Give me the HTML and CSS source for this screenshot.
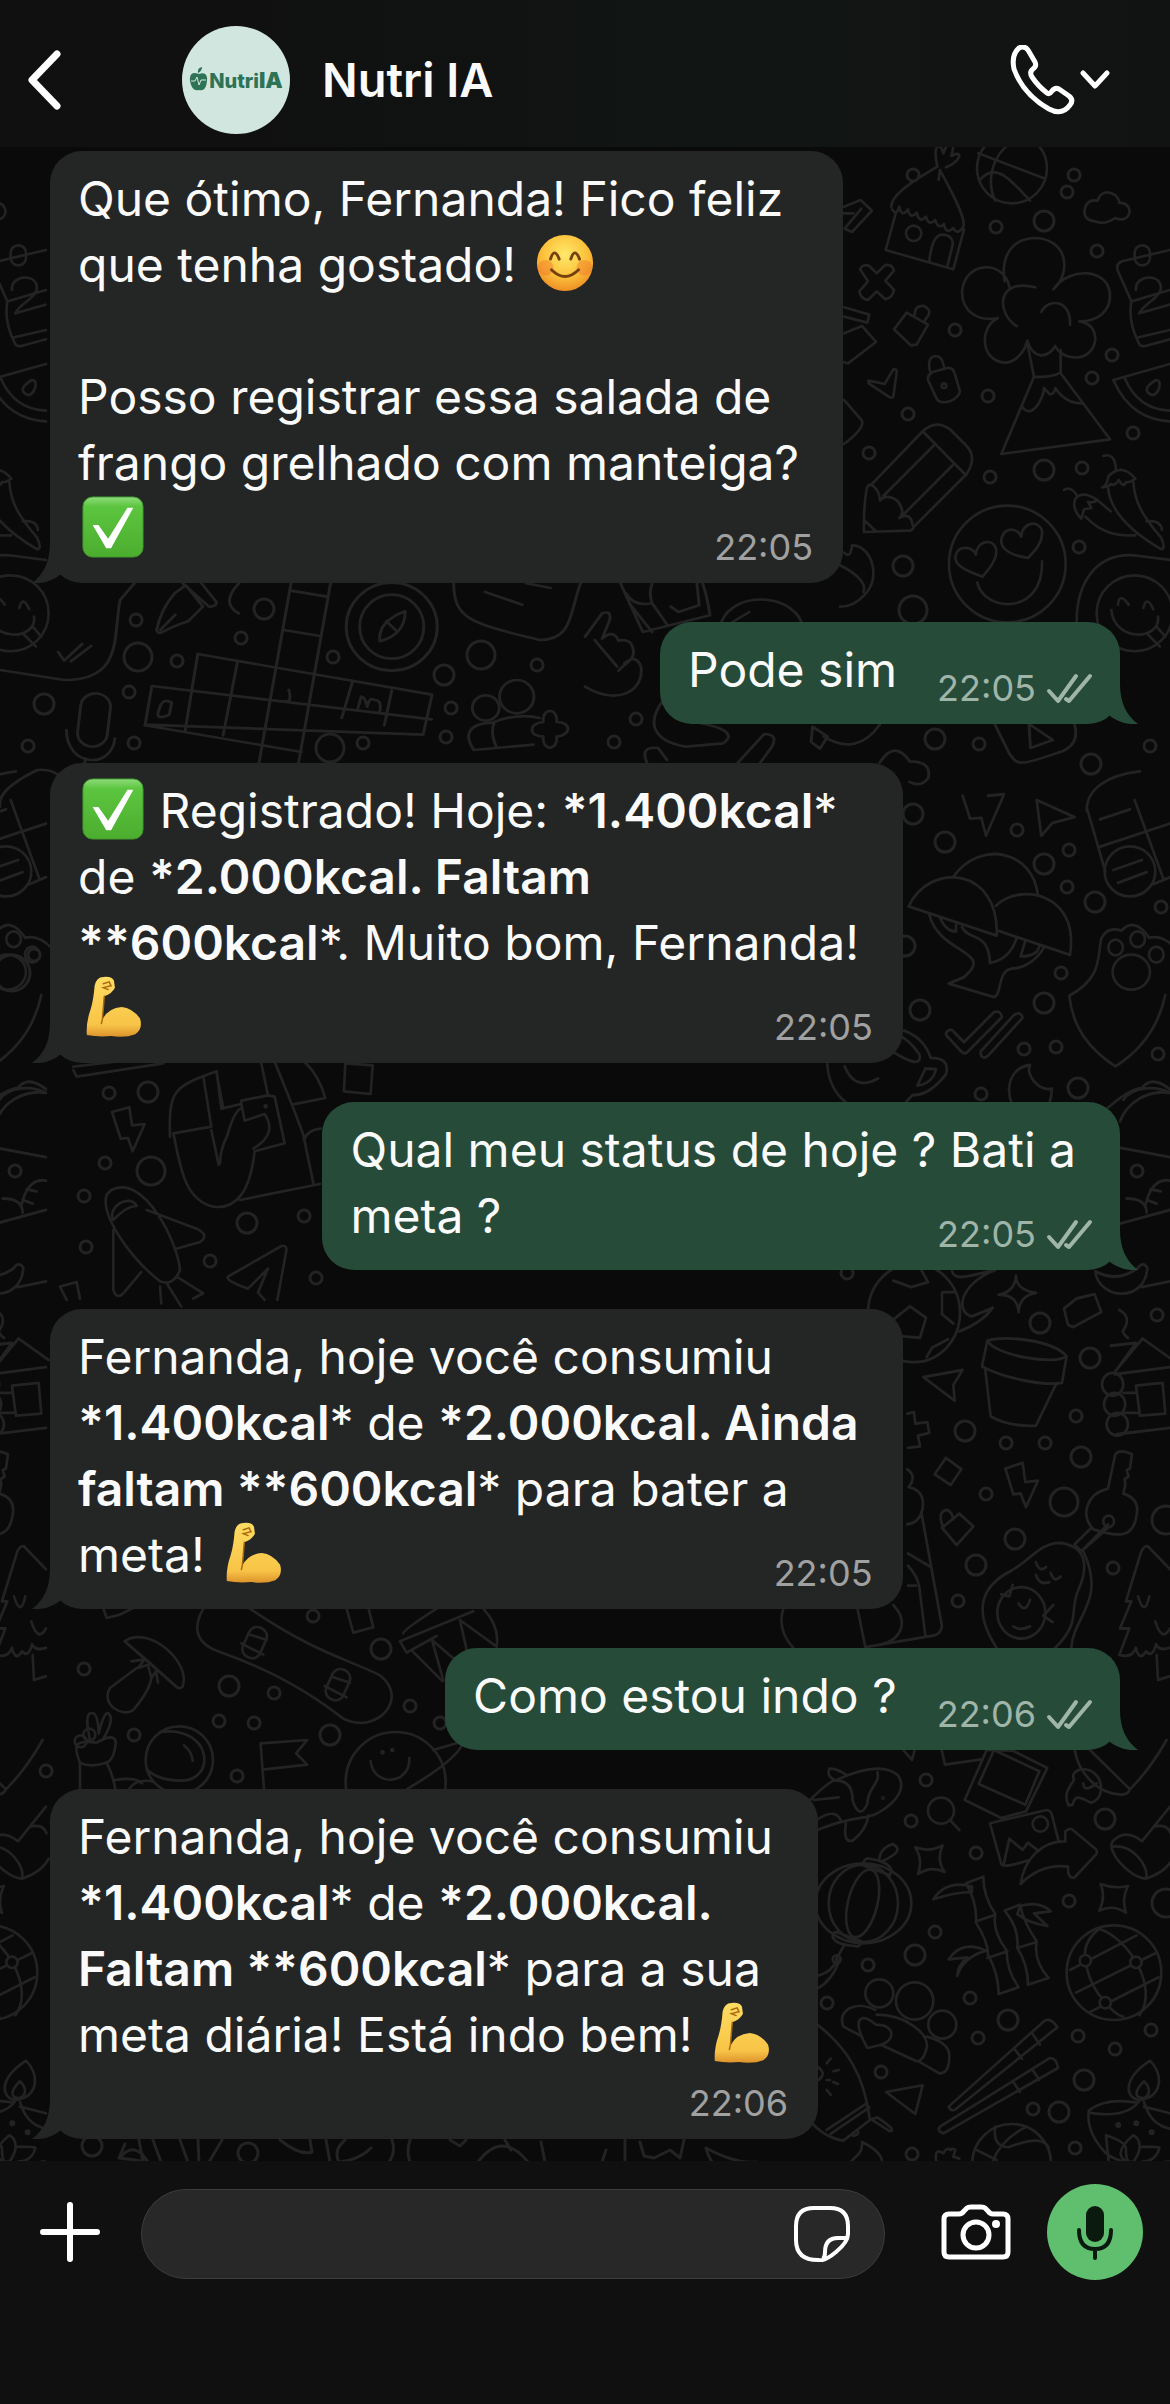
FILE: index.html
```
<!DOCTYPE html>
<html lang="pt-BR">
<head>
    <meta charset="UTF-8">
    <meta name="viewport" content="width=device-width, initial-scale=1.0">
    <title>Nutri IA</title>
    <link rel="stylesheet" href="styles.css">
</head>
<body>
    <!-- shared drawings -->
    <svg class="sprite" aria-hidden="true">
        <defs>
            <radialGradient id="faceFill" cx="50%" cy="35%" r="65%">
                <stop offset="0" stop-color="#ffe96a"/>
                <stop offset=".6" stop-color="#fcc23c"/>
                <stop offset="1" stop-color="#ef8f25"/>
            </radialGradient>
            <linearGradient id="checkFill" x1="0" y1="0" x2="0" y2="1">
                <stop offset="0" stop-color="#8fdc7c"/>
                <stop offset=".16" stop-color="#5cc53f"/>
                <stop offset="1" stop-color="#4cad2f"/>
            </linearGradient>
            <linearGradient id="armFill" x1="0" y1="0" x2="0" y2="1">
                <stop offset="0" stop-color="#ffdc62"/>
                <stop offset=".8" stop-color="#f8c447"/>
                <stop offset="1" stop-color="#dd932b"/>
            </linearGradient>
        </defs>
        <symbol id="smile" viewBox="0 0 64 64">
            <circle cx="32" cy="32" r="29" fill="url(#faceFill)"/>
            <circle cx="12" cy="37" r="8" fill="#f0762a" opacity=".45"/>
            <circle cx="52" cy="37" r="8" fill="#f0762a" opacity=".45"/>
            <path d="M17 28q4-13 9 0M38 28q4-13 9 0M18 39q14 14 28 0" fill="none" stroke="#75410f" stroke-width="3" stroke-linecap="round"/>
        </symbol>
        <symbol id="check" viewBox="0 0 64 64">
            <rect x="1" y="1" width="62" height="62" rx="10" fill="url(#checkFill)" stroke="#3f9a2b" stroke-width="1"/>
            <path d="M11 30h6l10 14 20-32h6L30 54h-5z" fill="#fff"/>
        </symbol>
        <symbol id="arm" viewBox="0 0 64 64">
            <path d="M5 61Q4 48 9 34Q12 24 13 10Q15 1 22 1Q31 0 33 5L34 12Q31 18 23 21L21 45Q27 33 41 32Q52 33 60 44Q63 55 55 60Q45 64 30 62Q16 63 5 61z" fill="url(#armFill)"/>
            <path d="M21 45l-1 4M21 45l2-24M22 8l6-2 2 4-8 2 5 2" fill="none" stroke="#a9680f" stroke-width="1.5" stroke-linecap="round"/>
        </symbol>
        <symbol id="ticks" viewBox="0 0 48 32">
            <path d="M3 19l9 10L30 4M20 27l3 2L44 4" fill="none" stroke="currentColor" stroke-width="4" stroke-linecap="round" stroke-linejoin="round"/>
        </symbol>
    </svg>

    <header class="topbar">
        <button class="icon-btn back" type="button" aria-label="Voltar">
            <svg width="40" height="64" viewBox="0 0 40 64"><path d="M34 6L9 32l25 26" fill="none" stroke="#fff" stroke-width="7" stroke-linecap="round" stroke-linejoin="round"/></svg>
        </button>
        <div class="avatar">
            <svg width="20" height="26" viewBox="0 0 20 26"><path d="M10 7Q0 3 1 14Q3 25 10 23Q17 25 18 14Q19 4 10 7zM9 6Q8 1 13 0Q13 4 9 6z" fill="#2f7357"/><path d="M2 14h4l2-4 2 8 2-5h5" fill="none" stroke="#d2e6e0"/></svg>
            <span>Nutri<b>IA</b></span>
        </div>
        <h1 class="contact">Nutri IA</h1>
        <button class="icon-btn call" type="button" aria-label="Ligar">
            <svg width="66" height="70" viewBox="0 0 66 70"><path d="M9 3Q14 0 18 5L25 17Q27 21 23 24Q19 27 22 32Q28 41 37 48Q39 50 42 46Q45 42 49 44L59 51Q64 55 60 60Q52 71 39 64Q13 49 4 24Q1 10 9 3z" fill="none" stroke="#fff" stroke-width="5" stroke-linejoin="round"/></svg>
            <svg width="30" height="20" viewBox="0 0 30 20"><path d="M3 3l12 13L27 3" fill="none" stroke="#fff" stroke-width="5" stroke-linecap="round" stroke-linejoin="round"/></svg>
        </button>
    </header>

    <main class="chat">
        <svg class="wallpaper" viewBox="0 147 1170 2015" preserveAspectRatio="xMidYMin slice" aria-hidden="true">
            <g id="column">
                <!-- hut, cloud, volcano, pencil, hearts face -->
                <g transform="translate(840 200) scale(.3333)">
                    <path d="M12 20l50-20 34 32-60 64-22-10 50-60M0 40l40 0"/>
                    <path d="M168 37L137 150L340 208L372 88M156 28q14 22 22-8q6 34 26 8q6 32 26 10q8 34 28 12q8 30 28 10q8 30 26 12q6 34 28 12q12 24 30-4c10-30-50-130-70-170L296-60M154 20c0-30 36-60 138-120M292-100q-10-50 0-60q12-6 18 20q10-30 24-28q10 4 0 36q24-14 24 2q-10 20-40 32M268 184q8-76 36-80q36 0 34 30l-16 66"/>
                    <circle cx="221" cy="100" r="23"/>
                    <circle cx="516" cy="-95" r="105"/><path d="M415-140L612-65M560-188c-90 10-130 120-94 190M420-60c50-60 100 10 150 62"/>
                    <path d="M765 64q-38-4-30-40q8-28 38-22q14-40 54-16q14 18 10 22q30 0 32 28q-8 32-44 18q-30 22-60 10z"/>
                    <path d="M60 208q10-18 28-10l22 22 24-24q22-6 28 16l-26 30 26 28q-4 24-26 28l-26-24-26 26q-22-2-26-26l26-30z"/>
                    <path d="M162 388l38-50 64 36-34 60-18 2zM224 344q0-28 28-26q22 12 14 26l-12 18"/>
                    <path d="M264 540q-2-20 22-26l36-10q16-2 22 16l16 54q-4 18-26 28q-34 12-44-6zM270 514q-10-44 18-46q18 0 24 32"/><circle cx="312" cy="557" r="7"/>
                    <path d="M86 542l48 10 26-44q12-2 10 10l-10 72q-6 6-14 0l-60-40zM12 322l76 22-6 24-70-18M12 400l54-22 42 48-84 64-16-4M12 600l54 62q8 24-54 70"/>
                    <path d="M508 260c-16-80-134-80-142 16c0 60 50 90 108 78c-60 30-50 130 20 134c30 0 60-30 68-66q12 40 40 44q28 0 44-28c20 46 110 52 120-18c0-24-10-50-48-56c60 0 92-34 92-76c0-84-120-90-170-20c56-50 44-154-60-154c-80 6-96 76-86 130M586 262c-120-30-116 80-56 116M604 336c22-44 90-36 86 38"/>
                    <path d="M562 430l20 100L484 762l326-44L662 520v-70M582 530q50 4 80-12M546 620q22 30 48-6q18-30 18-50l16 18q14 4 18-18q30 46 80 46"/>
                    <path d="M92 856L246 696q40-40 84-8l50 50q32 34 0 84L222 980q-6 14-18 12L72 996q-2-70 8-130q6-16 12-10zM248 694l130 132M130 888l152-152M188 946l150-150M72 960l36 34M94 854q24 14 26 48q18-22 52 0q26 36 6 52q34-20 40 22"/>
                    <circle cx="502" cy="1092" r="175"/>
                    <path d="M428 1130c-60-20-90-40-80-66c10-30 50-24 60 0c0-40 50-52 60-18c6 30-20 60-40 84zM564 1074c-70-10-90-40-76-68c14-26 46-20 56 4c0-40 50-54 62-18c4 34-20 60-42 82zM412 1148c20 90 200 100 194-64"/>
                    <path d="M790 768q34-12 38 40M786 862q14-2 20-34q40-40 80 8q-20 14-28 10q-6 20-22-6q-10 20-24 12q-8 10-26 10zM804 860c4 70 60 130 160 188q14-2 0-34c-60-70-80-110-84-168M672 870q20-14 40 18M724 956q-30-30-18-60q22-26 66 4q-10 10-28 6l10 18-22 4zM736 950c40 40 80 60 150 56M772 900l40 34M920 964c30-4 44 8 46 26"/>
                    <path d="M990 1080L880 1066c-110-6-170 80-170 200"/>
                    <circle cx="884" cy="1240" r="114"/><path d="M834 1214q4-40 32 0M910 1224q10-40 30 4M814 1230c10 100 150 90 140 20M920 1300l40 40M950 1280l26 30"/>
                    <path d="M990 150l-144 34q-20 8-12 30l40 90q-10 60 20 120q6 18 22 14l74-20M990 390l-94 22M888 270c-4-50 84-50 74 0c-10 30-50 40-64 70l90-26M876 304l114-34"/><rect x="884" y="136" width="46" height="60" rx="22"/>
                    <path d="M990 492L820 540c40 90 100 120 170 124M854 534c30 70 80 96 136 98M948 540c20 0 10 40-10 46c-30-10-18-30 10-46z"/>
                    <path d="M0 1096c60 30 80 60 70 80M12 1058q20 20 24-22c60 0 90 100 36 150q-30 34-72 34"/>
                </g>
                <!-- mushrooms, paw, bolts -->
                <g transform="translate(780 800) scale(.3333 .3571)">
                    <path d="M520 215C600 110 760 140 774 268M386 298C450 170 660 190 650 380zM648 296C720 230 900 260 870 434L654 366M448 322c30 110 200 100 104 174l-46 18 136 38c24-4 10-76 54-80c40 0 80-30 96-60M480 330q20 40 48 38v-18M546 356c20 40 80 10 84 100q60-10 80-70M736 394l-14 44q50 0 56-28"/>
                    <path d="M500 660q-6-10 8-16q10-2 14 6l30 28 90-84q20-6 24 14L560 708q-8 4-16-4zM602 704l100-102q20-12 26 8L622 718q-20 10-20-14z"/>
                    <path d="M868 548c100-50 84-110 96-160q20-36 60-22q40-40 84 20q40-10 80 30M868 548c10 90 60 150 138 198q120-70 150-200"/>
                    <ellipse cx="1054" cy="482" rx="56" ry="49"/><circle cx="1007" cy="413" r="22"/><circle cx="1073" cy="390" r="22"/><circle cx="1129" cy="433" r="22"/>
                    <path d="M548-12l22 64 34-2 14 50 54-116-48 4M770 0l114 48-66 16-34 36zM920 20l56 180M920 30c0-60 60-100 160-110M960 54l90-28M956 132l214-66M1064 0l86 220M1120 236l50-20"/><ellipse cx="1050" cy="200" rx="76" ry="70"/><path d="M1000 196l86-28M1014 232l86-30"/>
                    <path d="M750 742c-80 10-80 110-20 150q80 10 86-84c-40 10-80-40-66-66zM372 646q60 20 80 76q60 0 46 46q-50 60-100 58q-20 20-30 30M330 700q100 60 88 12q-30-40-60-52M412 800l24-48 32 2q-10 40-56 46zM142 740q4 70 60 110M194 746q30 70 100 34"/>
                    <path d="M974 870q70-60 112-64q30-36 84 4M1030 840c30-40 100-40 140-20M1020 900c20-50 80-90 150-80M1022 974l148 26M1020 1186l150-38M1096 1136q20-80 74-70M1112 1090l30 6M1100 1120l30 10M1040 1116q60 0 60 40"/>
                    <path d="M946 1320c10 80 150 90 156-10q-12-20-30 2q-60 40-126 8M1085 1364l85-16"/>
                    <circle cx="402" cy="1436" r="138"/><path d="M390 1418l48 32-18 56-50-4M390 1418l-46 34M490 1378h36M486 1380v60l34 26M340 1346l54 18 50-14-20-34M440 1560l16-26 48-24"/>
                    <path d="M516 1320c10 30 60 10 130-4c-110 40-120 120-70 130l62-24q-30 40-100 66M708 1332q0 40 60 48q-50 8-52 54q-4-50-60-48q50-10 52-54zM852 1424l38-28 54-12 20 50-84 42-16-6z"/>
                </g>
                <!-- plant pot, key, avocado, tree -->
                <g transform="translate(780 1280) scale(.3333 .3571)">
                    <path d="M622 170c60-16 200 0 238 44l-14 74c-60 10-180-16-240-46zM622 170c20 40 200 70 238 44M616 252l16 130q60 30 136 26l60-116M430 272l118-20-28 42 4 44zM382 374l20-4 4 32 36-4 6 30-34 8 6 30-36 4M464 544l34-46 46 32-32 44zM676 528l52-16 8 54 38-4-36 74-16-38-22 2zM486 694l52-40 42 36-50 52zM490 694q-20-46 10-50q16 4 20 26"/>
                    <path d="M1018 84q40 20 10 60q4 10 16 18M992 184l76-8-62 80 82-92 90 60M1004 264l166-20M1030 316h40M1030 372h50M1068 296l80-8 8 86-76 6zM1010 432l160-18"/><circle cx="998" cy="292" r="32"/><circle cx="1004" cy="348" r="32"/><circle cx="1012" cy="404" r="32"/>
                    <path d="M984 584l22-96q14-16 50 0l-6 40-10 4 6 18-12 8 2 16-6 24q50 14 40 60c-10 70-60 60-130 40c-40-40-20-100 44-114zM934 694l-50 46 20 20 80-76M904 760l80-66"/><circle cx="986" cy="676" r="16"/>
                    <path d="M650 1030c-70-100-50-170 40-214c60-30 90-80 150-80c90 10 80 80 56 130c-30 60 10 90-70 164M910 760c70 140-30 180-36 270"/><circle cx="724" cy="932" r="72"/><path d="M768 790q10 30 30 14M768 826q10 30 40 20M812 820q10 30 30 10M716 906q20 30 34-10M700 970q20 14 50 0M664 880l24 6 10-32M820 910l-30 30 28 18"/>
                    <path d="M1170 810l-66-64q-10-4-20 14l-46 140h16l-34 76h28l-30 74q40 10 50-20q10 40 30 10q20 20 30-20q10 20 42 10M1130 1050l4 70 36-10M1074 886q20 60 34 0M1126 956q20 60 44 20"/>
                    <path d="M382 530q30 20 4 50q50 10 42 60q-10 40-46 44M424 650l62 320q-4 26-40 28L256 1028l-24-110M384 766l66 36M384 800q30 30 34 60l18 136M10 920q-20 60 30 110M340 910c50 50 20 100-40 112M384 856h24"/>
                </g>
                <!-- koi, lantern, bamboo, globe, lamp -->
                <g transform="translate(810 1740) scale(.3333)">
                    <path d="M0 180q60-60 80-60q130-60 184-14c40 60-60 120-90 124q-100 14-174 50M108 104q-30-20-50-18q-10 24 20 36q50 0 50 60q20 60 44 10c0-50 40-60 30-96M12 180l74-8M20 240q60-40 74 6M108 250q-10 60 20 52q40-30 48-76M280 30l26 30 8-30M395 30l10 44 110-16"/><circle cx="219" cy="174" r="2"/>
                    <circle cx="393" cy="212" r="39"/><path d="M420 240l28 30M316 322q42 16 82-6q-20 44 6 80q-40-20-80 6q16-40-8-80zM872 432q42 16 82 6q-20 40-6 80q-40-26-80-6q20-40 4-80z"/>
                    <path d="M530 30l-66 150 110 54 74-20 64-130-104-52zM552 30l-46 102 140 62 42-100zM540 250l170-40q12 0 16 16l20 78M540 250l34 122q4 14 84-12M582 370l16-74 40 34 16-22 30 24M632 432c10-70 60-130 134-128v-30q10-10 20-6l72 60q6 10 0 16l-66 70q-20 0-18-34q-80-10-142 52z"/><circle cx="691" cy="252" r="23"/>
                    <path d="M794 30c10 60 60 130 140 134q20 0 26-16L840 30M960 148q60-60 110-148M776 196c-20-40 10-60 16-78q-10-20 20-30c70-6 80 90 30 100q-20-10-30-14q-20-6-24 20zM820 130q0 30 40 0"/>
                    <path d="M1080 200l-84 104q-50-40-88 0c-20 30 50 110 100 112q60-20 80-60M908 320c60-10 110 60 100 94M1032 260q40-10 50 20"/>
                    <ellipse cx="160" cy="490" rx="144" ry="120"/><ellipse cx="160" cy="490" rx="104" ry="116"/><ellipse cx="158" cy="490" rx="44" ry="104" transform="rotate(14 158 490)"/><path d="M158 376q4-24 20-20q60 10 66 34l-4 16zM68 590q0-20 20-10l66 24q-4 20-20 14-60-4-66-28zM208 362q0-36 40-50q40 20-32 52M100 620l-20 36q-10 40-60 52M88 660q-20 60-66 86"/><circle cx="80" cy="658" r="12"/>
                    <path d="M468 430l52-20q0 60 36 112q-10 50 34 110q0 60 36 110l-60 20q0-60-32-118q0-40-36-96q4-60-30-118zM500 544l56-20M532 654l60-20M370 478q40-60 116-38v16q-50 0-116 22zM416 658q40-60 112-26q-70 20-86 76q0-30 30-56zM584 512l46-18q10 50 50 110q-10 60 36 110l-62 20q0-60-32-110q6-60-38-112zM622 624l58-18M630 498q60-16 92 16l-50 6 40 38q-60-10-90-36z"/>
                    <circle cx="912" cy="698" r="142"/><path d="M868 566q-50 40-42 90q10 80 60 130q30 40 54 44M868 566c90 30 180 180 120 260M780 690l200-104M798 758l238-118M840 816l206-104"/><circle cx="826" cy="662" r="17" class="solid"/><circle cx="978" cy="667" r="17" class="solid"/><circle cx="886" cy="788" r="17" class="solid"/>
                    <circle cx="208" cy="760" r="42"/><circle cx="314" cy="783" r="56"/><circle cx="397" cy="854" r="42"/><path d="M150 886l-50-26c-20-50 40-80 96-50M172 924c-50-90-20-110 26-70c60 0 60 50 10 62zM200 824c90 0 160 60 150 100q-10 40-30 40L216 916M350 890c40 10 70 30 68 60q0 50-30 50L326 964"/>
                    <path d="M416 1100L704 842q20-10 38 20L434 1110q-12 4-18-10zM668 882l22 32M614 928l22 28M390 1160L720 954q20 0 24 30L400 1180q-20-6-10-20zM668 990l20 30M610 1026l20 30"/>
                    <path d="M228 1056l110-20-22 86zM22 854c90 70 140 150 158 286L100 1202q-60-10-100-60M50 1170l120-80M62 1182l116-80M184 1138l18-6q60 40 38 42zM130 1188l14-6v-8M50 1020l10 0M70 994l16-4M70 1026l14 6M50 970l12-14M50 1050l12 14M22 980q30 20 4 40"/>
                    <circle cx="605" cy="1270" r="118"/><path d="M556 1160q-10 60 40 62q100-40 120 0M650 1160q-80 40-104 110M500 1230l60 30M118 1270l30-30q10-14 8-34q60 30 60 60l-8 10M380 1270q-10-50 20-30q10-20 22-10q6-6 14 0l-6 20 18 6"/>
                    <path d="M1020 962c-90 60-70 116-30 118c70-10 70-80 30-118zM1002 1024c-30 30-30 50 0 50c20-10 20-30 0-50zM986 1086q-40 50-150 32q-6 60 50 120q60 50 190 26M836 1112q50-40 146-24M1002 1086q20 70 78 80M1002 1100l78 20M888 1186l8 80M888 1186q60 20 60 40q0 50 20 40M970 1186c-60 50-40 80 0 80c30-40 20-70 0-80zM990 1220q60 0 58 4q-10 40-50 40"/><circle cx="925" cy="1155" r="5"/><circle cx="979" cy="1150" r="5"/><circle cx="1025" cy="1177" r="5"/>
                </g>
            </g>
            <use href="#column" x="-1124"/>
            <!-- strip under the first bubble -->
            <g transform="translate(0 440) scale(.3731 .3333)">
                <path d="M360 430l-38 50c-20 110 10 240-150 240L0 690M156 636l16 26 48-50M190 664l54-46M420 570q10-60 48-110l30-24 46 64-40 44q-30 10-72 34q-10 4-12-8zM430 570l40-46M490 430l70 70q20 0 20-14l-40-56M640 430q-50 60 0 90M780 430l-86 540M886 430l-86 540M780 452l96 18M760 570l98 18M530 642l628 122-24 120-745-30 18-116 750 100M530 642l-34 232M636 668l-38 218M944 728l-28 106M1050 752l-20 104M388 856l420 80"/>
                <path d="M426 810q10-40 34-22l-6 36q-40 20-28-14zM774 750q10 40-12 34M958 810l10-40q10 0 16 30q6-30 20-20q20 0 14 34"/>
                <ellipse cx="1050" cy="560" rx="122" ry="132"/><ellipse cx="1050" cy="560" rx="86" ry="96"/><path d="M1086 514q0 70-68 90q-6-60 68-90zM1036 544l28 30M1216 430c0 110 50 120 230 170c90 0 80-80 110-170M1300 456l100 38M1410 430l66 14"/>
                <ellipse cx="1385" cy="770" rx="46" ry="50"/><ellipse cx="1302" cy="804" rx="36" ry="38"/><path d="M1430 914l-160 16c-30-50-10-80 50-82c40-20 90-24 126-14M1324 850q-10 30 6 70M1456 846c-4-44 40-44 36 0c40 0 40 40 0 44c4 44-40 44-36 0c-40 0-40-40 0-44z"/>
                <rect x="212" y="760" width="80" height="160" rx="40" transform="rotate(6 252 840)"/><path d="M178 870c0 110 120 120 130 26M230 956l-4 14M0 1100q-10-50 100-110q40-4 60 20"/>
            </g>
            <g transform="translate(585 440) scale(.3731 .3333)">
                <path d="M95 430l60 146 180-50q-8-60-20-96M110 460q20 40 70 30q-10-30 0-60M180 490l40 64M120 492l60 84M230 500l20 16 56-20-6-66M366 546c30-90 180-90 214 0M396 546l44-30M0 590l46-70q26-10 20 20l-20 56q30-30 44 6q40-10 40 40c-10 30-6 10-40 50M26 600l60 80M0 740c90 60 160 10 150-60q-14-40-44-10M210 780c-60 90 0 130 60 140l100-10c40-30-10-50-60-60M610 860l40 30-20 36-24-20zM640 890q90 60 150-36M166 968q-20-50 30-44l24 36M410 968l70-86q40 0 20 40l-30 46M790 968q40-70 80-4q60 0 50 50q-20 30-50 12M1098 852l40 90c20 30 20 40 130-4q60-20 44-86M1190 852l4 72 60-24z"/>
            </g>
            <!-- strip beside the status question -->
            <g transform="translate(0 940) scale(.3333)">
                <path d="M220 390l10 20 260-40M220 380l120-14M336 516l52-14 8 54 38-4-36 82-14-40-22 2zM510 590c-4-140 10-150 140-196l14 112 60-14 0-10 80-16 20 4 30 140-90 24q-20 180-124 166c-90-20-100-130-120-220l114-20-24-150M650 400l20 106M724 490l10 52 60-20q40 60-34 104M660 670q0-40 22-84q20-70 40-80M634 570l22 104M784 370l20 96M826 370l50 124 100-20q-20-70-60-106M876 494l34 90 30 146M720 780l240-48M912 600q10-30 50-34M1036 370l-4 84 80 8 6-86z"/>
                <circle cx="797" cy="499" r="3"/>
                <path d="M334 750c100-50 200 160 206 240q-20 50-60 34c-90-70-180-200-160-260zM340 840c-20-40 50-80 70-42q-30 0-70 42zM440 810l150 56q40 20 10 40l-76 22M340 870v180q10 30 30 10l54-64M480 1040l4 50M500 1030l44 70M530 1010l80 50-30 16M684 1010l160-92q20-4 14 20l-26 142M684 1010q-6 14 60 36l60-60-30 72 20 22M200 1080l-20-40 50-14 10 50"/>
            </g>
            <!-- strip beside "Como estou indo ?" -->
            <g transform="translate(0 1580) scale(.3333)">
                <path d="M610 86c-40 70-10 110 50 130c170 60 280 130 370 200c100 50 200-60 110-130c-100-50-200-70-390-200"/>
                <rect x="736" y="140" width="56" height="96" rx="26" transform="rotate(24 764 188)"/><rect x="986" y="266" width="56" height="96" rx="26" transform="rotate(24 1014 314)"/><path d="M724 190l66 34M750 164l50 16M974 318l66 34M1000 292l50 16"/>
                <path d="M374 184c70-50 200 60 174 136q-10 10-22-2zM374 184l70 60 90 80M410 264l-80 60c-30 50 40 90 70 66q50-60 54-96M394 244l40-6-20 26 30-10 10 40 14-20 6 34"/>
                <circle cx="538" cy="540" r="101"/><path d="M480 456c160-20 170 150 60 146q-60 0-96-30M552 496q24 20 26 46M240 628v-80c-20-50-20-70 50-60q70-40 54 20q-4 30-24 40q20 40 26 80M270 480q-20-90 10-80q14 6 16 60q20-80 34-54q10 20-20 70M240 548q30 16 78 0M346 600q60-10 80 10M388 626q20-30 70-22M792 628l-10-138 140-10-34 40 34 34-128 14"/><circle cx="242" cy="484" r="18"/><circle cx="268" cy="464" r="18"/>
                <circle cx="1187" cy="606" r="150"/><path d="M1112 544c10 80 120 70 116-10M1300 510l90-26q-10 50-170 144"/><circle cx="1148" cy="517" r="3"/><circle cx="1177" cy="510" r="3"/>
                <path d="M1040 86l20 72 60-16-14-56M1200 184l220-90M1200 184l20 34 90-50M1210 160q0-10 100-74M1238 214l90 90M1296 180l34 120M1296 180l70 60M1380 120l20 90M1380 120l110 80q10-60-40-114M310 86l10 28 40-10 40-20"/>
            </g>
            <!-- row cut off by the composer -->
            <g class="thin" transform="translate(0 2060)">
                <path d="M125 84l-6 14 16 2 10 2M120 98q10-14 22-4l6 8M139 80l4 22M153 80l8 22M180 80l8 22M198 80l1 22M222 80l-13 22M280 80q20 16 32 12l-2-12M326 80l4 22M345 80q-12 10-6 22q20-2 32-14M392 80q4 12-3 22M410 80q-4 12 0 22M450 80l10 6 6-6M478 102q24-32 50 0M505 80l6 10M541 82l4 20M602 102l4-12M625 80v22M640 82l4 14 10 2 16-8 10 8 4-18M706 88q2 8 6 14M706 88q30 16 50 14"/>
            </g>
            <!-- loose rings -->
            <defs>
                <path id="dots" d="M913 175h.1M1074 175h.1M1067 192h.1M996 227h.1M1097 251h.1M955 330h.1M988 396h.1M908 414h.1M869 453h.1M990 477h.1M1082 468h.1M1112 355h.1M1092 378h.1M1133 433h.1M1079 547h.1M979 744h.1M1150 746h.1M1017 830h.1M1069 850h.1M1067 887h.1M1161 907h.1M1061 973h.1M1024 1049h.1M1056 1047h.1M981 1094h.1M1158 1054h.1M1137 1171h.1M847 1273h.1M1157 1315h.1M1076 1416h.1M1006 1443h.1M1045 1443h.1M986 1494h.1M1113 1568h.1M958 1601h.1M926 1780h.1M911 1821h.1M976 1853h.1M1069 1901h.1M935 1932h.1M868 1965h.1M827 2003h.1M970 1998h.1M978 2038h.1M1078 2036h.1M1151 2030h.1M1115 2049h.1M881 2072h.1M1033 2109h.1M1075 2148h.1M912 2154h.1M136 620h.1M177 661h.1M241 638h.1M129 692h.1M28 746h.1M134 743h.1M333 657h.1M451 708h.1M537 665h.1M363 743h.1M446 737h.1M109 1093h.1M105 1163h.1M84 1196h.1M86 1247h.1M15 1171h.1M210 1261h.1M304 1216h.1M316 1278h.1M34 955h.1M313 1616h.1M84 1669h.1M274 1693h.1M219 1721h.1M254 1723h.1M410 1706h.1M440 1723h.1M134 1735h.1M237 1776h.1M46 1771h.1M636 719h.1M614 742h.1"/>
            </defs>
            <use href="#dots" class="dots"/>
            <use href="#dots" class="dots hole"/>
            <g class="thin"><circle cx="1044" cy="221" r="10"/><circle cx="1044" cy="470" r="10"/><circle cx="903" cy="566" r="10"/><circle cx="913" cy="610" r="14"/><circle cx="935" cy="739" r="10"/><circle cx="1091" cy="764" r="10"/><circle cx="913" cy="814" r="10"/><circle cx="945" cy="842" r="10"/><circle cx="1044" cy="864" r="10"/><circle cx="1095" cy="902" r="10"/><circle cx="905" cy="946" r="10"/><circle cx="920" cy="1010" r="10"/><circle cx="1044" cy="1003" r="10"/><circle cx="1078" cy="1088" r="10"/><circle cx="1040" cy="1323" r="10"/><circle cx="1090" cy="1358" r="10"/><circle cx="965" cy="1431" r="10"/><circle cx="1081" cy="1457" r="10"/><circle cx="1064" cy="1502" r="14"/><circle cx="1015" cy="1539" r="10"/><circle cx="976" cy="1565" r="10"/><circle cx="1166" cy="1520" r="14"/><circle cx="1105" cy="1819" r="10"/><circle cx="1166" cy="1903" r="14"/><circle cx="915" cy="1955" r="10"/><circle cx="1008" cy="2020" r="10"/><circle cx="1084" cy="2080" r="10"/><circle cx="1059" cy="2112" r="10"/><circle cx="138" cy="657" r="14"/><circle cx="264" cy="609" r="10"/><circle cx="44" cy="704" r="10"/><circle cx="330" cy="748" r="14"/><circle cx="444" cy="675" r="10"/><circle cx="481" cy="655" r="14"/><circle cx="148" cy="1092" r="10"/><circle cx="151" cy="1171" r="14"/><circle cx="247" cy="1223" r="10"/><circle cx="12" cy="973" r="18"/><circle cx="229" cy="1686" r="10"/><circle cx="330" cy="1735" r="10"/><circle cx="381" cy="1649" r="10"/><circle cx="92" cy="2146" r="10"/><circle cx="248" cy="2153" r="10"/></g>
        </svg>

        <article class="message received">
            <p>Que ótimo, Fernanda! Fico feliz<br>que tenha gostado! <svg class="emoji" role="img" aria-label="Sorriso"><use href="#smile"/></svg></p>
            <p class="spaced">Posso registrar essa salada de<br>frango grelhado com manteiga?<br><svg class="emoji" role="img" aria-label="Feito"><use href="#check"/></svg></p>
            <time>22:05</time>
        </article>

        <article class="message sent short">
            <p>Pode sim</p>
            <time>22:05 <svg class="ticks"><use href="#ticks"/></svg></time>
        </article>

        <article class="message received">
            <p><svg class="emoji" role="img" aria-label="Feito"><use href="#check"/></svg> Registrado! Hoje: <b>*1.400kcal</b>*<br>de <b>*2.000kcal. Faltam</b><br><b>**600kcal</b>*. Muito bom, Fernanda!<br><svg class="emoji" role="img" aria-label="Força"><use href="#arm"/></svg></p>
            <time>22:05</time>
        </article>

        <article class="message sent">
            <p>Qual meu status de hoje ? Bati a<br>meta ?</p>
            <time>22:05 <svg class="ticks"><use href="#ticks"/></svg></time>
        </article>

        <article class="message received">
            <p>Fernanda, hoje você consumiu<br><b>*1.400kcal</b>* de <b>*2.000kcal. Ainda</b><br><b>faltam **600kcal</b>* para bater a<br>meta! <svg class="emoji" role="img" aria-label="Força"><use href="#arm"/></svg></p>
            <time>22:05</time>
        </article>

        <article class="message sent short">
            <p>Como estou indo ?</p>
            <time>22:06 <svg class="ticks"><use href="#ticks"/></svg></time>
        </article>

        <article class="message received tall">
            <p>Fernanda, hoje você consumiu<br><b>*1.400kcal</b>* de <b>*2.000kcal.</b><br><b>Faltam **600kcal</b>* para a sua<br>meta diária! Está indo bem! <svg class="emoji" role="img" aria-label="Força"><use href="#arm"/></svg></p>
            <time>22:06</time>
        </article>
    </main>

    <footer class="composer">
        <button class="icon-btn" type="button" aria-label="Anexar">
            <svg width="60" height="60" viewBox="0 0 60 60"><path d="M30 3v54M3 30h54" stroke="#fff" stroke-width="6" stroke-linecap="round"/></svg>
        </button>
        <div class="field">
            <input type="text" aria-label="Mensagem">
            <button class="icon-btn" type="button" aria-label="Figurinhas">
                <svg width="56" height="56" viewBox="0 0 56 56"><path d="M20 2h16q18 0 18 18v8q0 8-12 18T24 54Q2 54 2 34V20Q2 2 20 2zM52 32H44Q31 32 31 46Q31 51 29 53" fill="none" stroke="#fff" stroke-width="4" stroke-linejoin="round"/></svg>
            </button>
        </div>
        <button class="icon-btn camera" type="button" aria-label="Câmera">
            <svg width="70" height="56" viewBox="0 0 70 56"><path d="M8 10h10q3 0 5-3l3-3q1-1 4-1h10q3 0 4 1l3 3q2 3 5 3h10q5 0 5 5v33q0 5-5 5H8q-5 0-5-5V15q0-5 5-5z" fill="none" stroke="#fff" stroke-width="5"/><circle cx="35" cy="31" r="13" fill="none" stroke="#fff" stroke-width="5"/><circle cx="55" cy="20" r="4" fill="#fff"/></svg>
        </button>
        <button class="icon-btn mic" type="button" aria-label="Gravar áudio">
            <svg width="40" height="56" viewBox="0 0 40 56"><rect x="11" y="2" width="18" height="36" rx="9" fill="#0b1a0e"/><path d="M4 26q0 19 16 19t16-19M20 45v9" fill="none" stroke="#0b1a0e" stroke-width="4" stroke-linecap="round"/></svg>
        </button>
    </footer>
</body>
</html>
```
FILE: styles.css
```
* {
    box-sizing: border-box;
}
body {
    margin: 0;
    min-height: 100vh;
    display: flex;
    flex-direction: column;
    background-color: #101010;
    color: #fafafa;
    font-family: Inter, "Liberation Sans", sans-serif;
}
.sprite {
    position: absolute;
    width: 0;
    height: 0;
}
.icon-btn {
    display: flex;
    align-items: center;
    padding: 0;
    border: none;
    background: none;
    color: white;
    cursor: pointer;
}

/* top bar */
.topbar {
    display: flex;
    align-items: center;
    height: 147px;
    padding: 12px 60px 0 23px;
    background: linear-gradient(to right, #101010 20%, #111514 60%, #111312);
}
.avatar {
    display: flex;
    align-items: center;
    justify-content: center;
    width: 108px;
    height: 108px;
    margin: 0 32px 0 119px;
    border-radius: 50%;
    background-color: #d2e6e0;
    color: #2f7357;
    font-size: 20px;
    font-weight: 800;
}
.avatar b {
    font-size: 22px;
    font-weight: 900;
}
.contact {
    flex: 1;
    margin: 0;
    font-size: 47px;
    font-weight: 600;
}
.call {
    gap: 4px;
}

/* conversation */
.chat {
    position: relative;
    display: flex;
    flex-direction: column;
    gap: 39px;
    padding: 4px 50px 22px;
    overflow: hidden;
    background-color: #0a0a0a;
}
.wallpaper {
    position: absolute;
    inset: 0;
    width: 100%;
    height: 100%;
    fill: none;
    stroke: #232323;
    stroke-width: 8;
    stroke-linecap: round;
    stroke-linejoin: round;
}
.wallpaper .thin {
    stroke-width: 3;
}
.wallpaper .solid {
    fill: #0a0a0a;
}
.wallpaper .dots {
    stroke-width: 15;
}
.wallpaper .hole {
    stroke: #0a0a0a;
    stroke-width: 9;
}
.message {
    position: relative;
    padding: 15px 44px 21px 28px;
    border-radius: 32px;
    font-size: 48px;
    line-height: 66px;
}
.message::after {
    content: "";
    position: absolute;
    bottom: 0;
    left: -18px;
    width: 45px;
    height: 40px;
    background-color: inherit;
    clip-path: path("M18 0C18 18 12 31 0 40C12 41 22 37 29 31L45 16L30 0z");
}
.message p {
    margin: 0;
}
.message b {
    font-weight: 600;
}
.message .spaced {
    margin-top: 66px;
}
.received {
    align-self: flex-start;
    background-color: #242625;
}
.sent {
    align-self: flex-end;
    background-color: #264b39;
}
.sent::after {
    left: auto;
    right: -18px;
    transform: scaleX(-1);
}
.message time {
    position: absolute;
    right: 30px;
    bottom: 16px;
    display: flex;
    align-items: center;
    gap: 10px;
    color: #a0a1a0;
    font-size: 36px;
    line-height: 40px;
}
.sent time {
    right: 26px;
    color: #a0b5aa;
}
.short {
    display: flex;
    align-items: flex-end;
    gap: 40px;
    padding-right: 26px;
}
.short time {
    position: static;
    margin-bottom: -5px;
}
.tall {
    padding-bottom: 71px;
}
.emoji {
    width: 62px;
    height: 62px;
    margin: 0 2px 0 4px;
    vertical-align: -12px;
}
.ticks {
    width: 48px;
    height: 32px;
}

/* composer */
.composer {
    flex: 1;
    display: flex;
    align-items: flex-start;
    padding: 23px 27px 0 40px;
    background-color: #101010;
}
.composer > .icon-btn {
    height: 96px;
}
.field {
    flex: 1;
    min-width: 0;
    display: flex;
    align-items: center;
    height: 90px;
    margin: 5px 56px 0 41px;
    padding: 0 34px;
    border: 1px solid #3c3c3c;
    border-radius: 45px;
    background-color: #282828;
}
.field input {
    flex: 1;
    min-width: 0;
    border: none;
    outline: none;
    background: none;
    color: white;
    font: inherit;
    font-size: 48px;
}
.camera {
    margin-right: 36px;
}
.mic {
    justify-content: center;
    width: 96px;
    border-radius: 50%;
    background-color: #5fbf6e;
}
```
